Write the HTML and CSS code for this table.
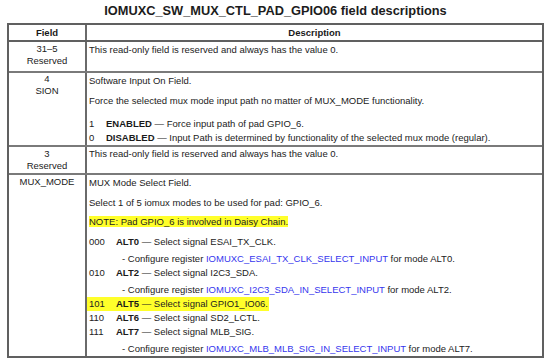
FILE: index.html
```html
<!DOCTYPE html>
<html>
<head>
<meta charset="utf-8">
<link rel="stylesheet" href="styles.css">
</head>
<body>
<h1 class="title">IOMUXC_SW_MUX_CTL_PAD_GPIO06 field descriptions</h1>
<div class="fields">
  <div class="row head">
    <div class="c-field">Field</div>
    <div class="c-desc">Description</div>
  </div>
  <div class="row r-res1">
    <div class="c-field">31–5<br>Reserved</div>
    <div class="c-desc"><p>This read-only field is reserved and always has the value 0.</p></div>
  </div>
  <div class="row r-sion">
    <div class="c-field">4<br>SION</div>
    <div class="c-desc">
      <p>Software Input On Field.</p>
      <p class="gap6">Force the selected mux mode input path no matter of MUX_MODE functionality.</p>
      <div class="opts">
        <p><span class="num n1">1</span><b>ENABLED</b> — Force input path of pad GPIO_6.</p>
        <p><span class="num n1">0</span><b>DISABLED</b> — Input Path is determined by functionality of the selected mux mode (regular).</p>
      </div>
    </div>
  </div>
  <div class="row r-res2">
    <div class="c-field">3<br>Reserved</div>
    <div class="c-desc"><p>This read-only field is reserved and always has the value 0.</p></div>
  </div>
  <div class="row r-mux">
    <div class="c-field">MUX_MODE</div>
    <div class="c-desc">
      <p>MUX Mode Select Field.</p>
      <p class="gap6">Select 1 of 5 iomux modes to be used for pad: GPIO_6.</p>
      <p class="gap5"><span class="hl">NOTE: Pad GPIO_6 is involved in Daisy Chain.</span></p>
      <div class="alts">
        <p><span class="num">000</span><b>ALT0</b> — Select signal ESAI_TX_CLK.</p>
        <p class="cfg">- Configure register <span class="link">IOMUXC_ESAI_TX_CLK_SELECT_INPUT</span> for mode ALT0.</p>
        <p><span class="num">010</span><b>ALT2</b> — Select signal I2C3_SDA.</p>
        <p class="cfg">- Configure register <span class="link">IOMUXC_I2C3_SDA_IN_SELECT_INPUT</span> for mode ALT2.</p>
        <p><span class="hl hl-row"><span class="num">101</span><b>ALT5</b> — Select signal GPIO1_IO06.</span></p>
        <p><span class="num">110</span><b>ALT6</b> — Select signal SD2_LCTL.</p>
        <p><span class="num">111</span><b>ALT7</b> — Select signal MLB_SIG.</p>
        <p class="cfg">- Configure register <span class="link">IOMUXC_MLB_MLB_SIG_IN_SELECT_INPUT</span> for mode ALT7.</p>
      </div>
    </div>
  </div>
</div>
</body>
</html>
```

FILE: styles.css
```css
html, body {
  margin: 0;
  padding: 0;
  background: #ffffff;
}
body {
  font-family: "Liberation Sans", Arial, sans-serif;
  color: #222222;
  padding: 0 0 0 7px;
}
.title {
  margin: 0;
  height: 23px;
  width: 537px;
  font-size: 12.8px;
  line-height: 22px;
  font-weight: bold;
  text-align: center;
  color: #1c1c1c;
}
.fields {
  width: 537px;
  box-sizing: border-box;
  border: 2px solid #606060;
  font-size: 9.5px;
}
.row {
  display: grid;
  grid-template-columns: 78px 1fr;
  border-top: 2px solid #7a7a7a;
}
.row.head {
  border-top: none;
  border-bottom: 2px solid #606060;
  font-weight: bold;
  color: #1a1a1a;
  line-height: 15px;
  text-align: center;
}
.row.head + .row {
  border-top: none;
}
.c-field {
  border-right: 2px solid #6a6a6a;
  text-align: center;
  line-height: 12px;
  padding-top: 1px;
}
.c-desc {
  padding: 1px 2px 0 2px;
  line-height: 14px;
}
.head .c-field, .head .c-desc {
  line-height: 15px;
  padding: 0;
}
.r-res1 {
  height: 29px;
}
.r-res2 {
  height: 26px;
}
.r-res2 .c-desc {
  padding-top: 0;
}
.r-sion .c-field {
  padding-top: 0;
}
p {
  margin: 0;
}
.gap6 {
  margin-top: 6px;
}
.gap5 {
  margin-top: 5px;
}
.opts {
  margin-top: 9px;
}
.alts {
  margin-top: 6px;
}
.num {
  display: inline-block;
  width: 27px;
}
.num.n1 {
  width: 17px;
}
.cfg {
  margin-top: 3px;
  padding-left: 33px;
}
.link {
  color: #3636ee;
}
.hl {
  background: #ffff2a;
}
.hl-row {
  display: inline-block;
  margin-left: -2px;
  padding-left: 2px;
  padding-right: 1px;
}
b {
  font-weight: bold;
  color: #1a1a1a;
}
```
